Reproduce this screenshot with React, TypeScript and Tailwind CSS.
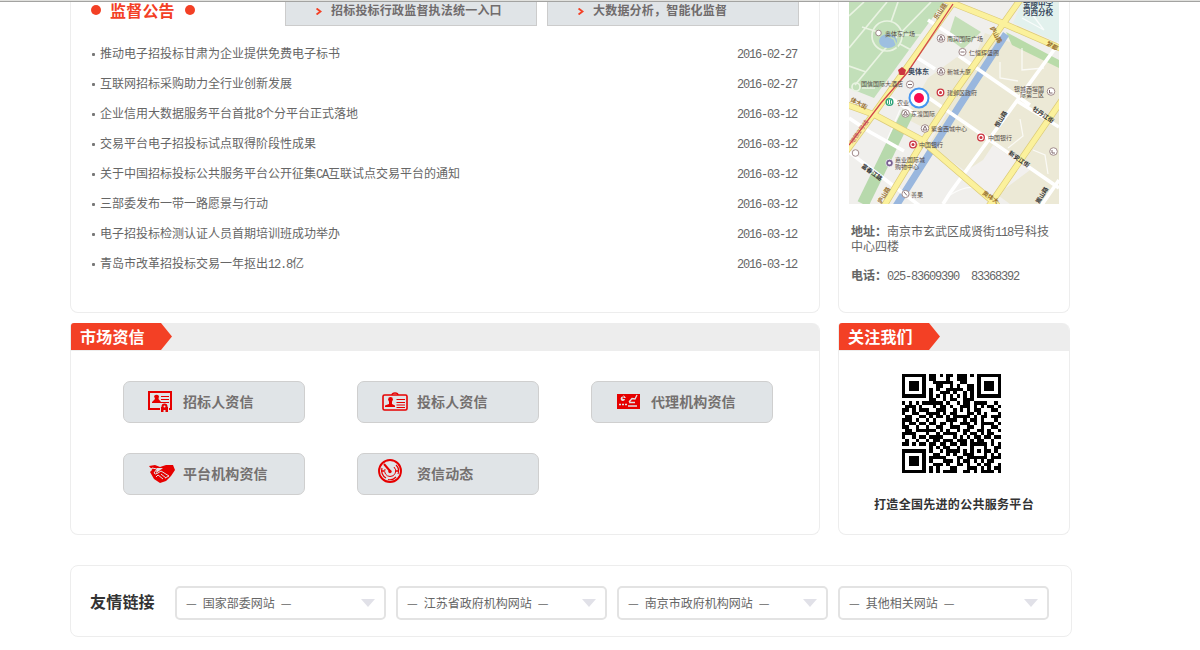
import React from "react";

function Mixed({ text }: { text: string }) {
  return (
    <>
      {text.split(/([\x20-\x7e]+)/).map((part, i) =>
        i % 2 === 1 ? (
          <span key={i} className="font-['Liberation_Mono'] leading-none tracking-[-1.2px] whitespace-pre">
            {part}
          </span>
        ) : (
          part
        )
      )}
    </>
  );
}

const news = [
  ["推动电子招投标甘肃为企业提供免费电子标书", "2016-02-27"],
  ["互联网招标采购助力全行业创新发展", "2016-02-27"],
  ["企业信用大数据服务平台首批8个分平台正式落地", "2016-03-12"],
  ["交易平台电子招投标试点取得阶段性成果", "2016-03-12"],
  ["关于中国招标投标公共服务平台公开征集CA互联试点交易平台的通知", "2016-03-12"],
  ["三部委发布一带一路愿景与行动", "2016-03-12"],
  ["电子招投标检测认证人员首期培训班成功举办", "2016-03-12"],
  ["青岛市改革招投标交易一年抠出12.8亿", "2016-03-12"],
];

function Tab({ text }: { text: string }) {
  return (
    <div className="flex h-6 w-[252px] items-start border border-t-0 border-[#ccc] bg-[#e0e4e7] pl-[30px]">
      <svg className="mt-[6px] mr-[9px] h-[7px] w-[6px]" viewBox="0 0 6 7">
        <path d="M0.5 0.5L4.5 3.5L0.5 6.5" fill="none" stroke="#f34025" strokeWidth="1.9" />
      </svg>
      <span className="leading-[15px] font-bold tracking-[0.2px] text-[#706c6d]">{text}</span>
    </div>
  );
}

const mapLabels: [number, number, string][] = [
  [885, 35.5, "奥体东广场"],
  [947, 40.5, "南润国际广场"],
  [969, 54.5, "仁恒辉盛阁"],
  [947, 73.5, "新城大厦"],
  [861, 86, "国信国际大酒店"],
  [947, 95, "建邺区政府"],
  [897, 104.5, "农业"],
  [911, 116, "东渡国际"],
  [931, 131, "紫金西城中心"],
  [919, 147, "中国银行"],
  [988, 139.5, "中国银行"],
  [895, 162, "嘉业国际城"],
  [895, 168.5, "购物中心"],
  [911, 196.5, "善果"],
  [1014, 90.5, "银城西堤国"],
  [1020, 96.5, "际第二区"],
];

const mapRoadLabels: [number, number, number, string, string][] = [
  [990, 28, 62, "庐山路", "#98702f"],
  [881, 204, -58, "庐山路", "#98702f"],
  [1046, 45, 28, "梦都", "#98702f"],
  [850, 101, 28, "体大街", "#98702f"],
  [982, 194, 34, "奥体大", "#98702f"],
  [861, 167, 36, "富春江路", "#333"],
  [1008, 154, 35, "新安江街", "#333"],
  [1032, 110, 34, "牡丹江街", "#333"],
  [998, 128, -58, "恒山路", "#333"],
  [1039, 204, -58, "嵩山路", "#333"],
];

function MapPicture() {
  return (
    <svg className="block h-[202px] w-[210px]" viewBox="849 2 210 202">
      <rect x="849" y="2" width="210" height="202" fill="#f0efec" />
      <path d="M957 57L978 68L959 101L928 130L905 118L928 78ZM985 33L1059 60V204H1010L950 160L928 146L958 95Z" fill="#ece9d6" />
      <path d="M983 160L993 145L1030 170L990 200L958 176Z" fill="#f2f0ee" />
      <path d="M849 2H944L874 98L849 88Z" fill="#c2dfb9" />
      <path d="M1022 2H1059V43L1013 23Z" fill="#e2f1ed" />
      <path d="M1006 32L1059 60V68L1012 45Z" fill="#b9dba9" />
      <path d="M955 16L981 32L963 49L948 38Z" fill="#c4dfb8" />
      <path d="M908 112L863 204" stroke="#b7d9ac" strokeWidth="12" />
      <g fill="none" stroke="#e9f3e2" strokeWidth="1.7">
        <circle cx="887" cy="36" r="15" />
        <path d="M849 16L864 2M849 48L887 2M855 85L883 51L931 2M862 27L878 32M891 22L898 2M900 44L913 51M862 88H875M903 35H921M849 66L866 72" />
        <circle cx="856" cy="87" r="4" />
      </g>
      <ellipse cx="888" cy="41" rx="9" ry="7" fill="#9dbfe0" />
      <path d="M886 35L894 39L898 49" stroke="#c2dfb9" strokeWidth="1.5" fill="none" />
      <path d="M1006 34L960 105L896 206" stroke="#99b7de" strokeWidth="7" fill="none" />
      <g fill="none" stroke="#fff" strokeWidth="3.6">
        <path d="M845 149L920 206M926 96L1059 188M1059 43L950 193L943 204M1017 101L1059 127M959 56L1030 105M849 118L870 132L904 151M849 145L887 96L919 116M1059 180L1041 206M928 20L962 42M913 55L935 69" />
        <path d="M1025 5L1044 30L1022 18M1000 62V78L1018 81M1022 48V70L1044 68M1020 119L1023 136L1008 148M950 195Q970 183 978 190M900 110L887 140M1033 150L1045 155L1048 174" strokeWidth="1.3" opacity=".75" />
      </g>
      <g fill="none" stroke="#dccb78" strokeWidth="6.6">
        <path d="M955 0L878 108L845 153M1020 0L957 89L925 138L884 206M945 0L1000 22L1062 49M845 104L875 115L920 139L998 206M1062 100L989 206" />
      </g>
      <g fill="none" stroke="#fbf19c" strokeWidth="5.2">
        <path d="M955 0L878 108L845 153M1020 0L957 89L925 138L884 206M945 0L1000 22L1062 49M845 104L875 115L920 139L998 206M1062 100L989 206" />
      </g>
      <path d="M953 4L907 73L881 103L849 145" fill="none" stroke="#d2444b" strokeWidth="1.3" />
      <g fill="#fff" stroke="#a18b8c" strokeWidth="1">
        <circle cx="878.500" cy="33" r="2.800" />
        <circle cx="941" cy="38.500" r="3.800" />
        <circle cx="962.500" cy="52" r="3.600" />
        <circle cx="941" cy="71.500" r="3.800" />
        <circle cx="910" cy="84.500" r="3.600" />
        <circle cx="905.500" cy="113.500" r="3.800" />
        <circle cx="925" cy="128.500" r="3.800" />
        <circle cx="905.500" cy="194" r="3.600" />
        <circle cx="855.500" cy="153" r="3.300" />
        <circle cx="1051" cy="91.500" r="3.800" />
        <circle cx="1053.500" cy="151.500" r="3.800" />
      </g>
      <g fill="none" stroke="#80696d" strokeWidth="1">
        <path d="M939 40L941 36L943 40ZM939 73L941 69L943 73ZM903.500 115L905.500 111L907.500 115ZM923 130L925 126L927 130ZM960.500 52H964.500M908 84.500H912M904 192L907 195.500M1049.500 90V93H1052.500M1052 150V153H1055" />
      </g>
      <g fill="#fff" stroke="#cc3540" strokeWidth="1.3">
        <circle cx="940.500" cy="92.500" r="3.300" />
        <circle cx="913" cy="144.500" r="3.300" />
        <circle cx="981" cy="137.500" r="3.300" />
      </g>
      <g fill="#cc3540">
        <circle cx="940.500" cy="92.500" r="1.500" />
        <circle cx="913" cy="144.500" r="1.500" />
        <circle cx="981" cy="137.500" r="1.500" />
        <path d="M902 67L906 70L904.500 75H899.500L898 70Z" />
      </g>
      <circle cx="889.500" cy="102" r="3.300" fill="#fff" stroke="#31a57c" strokeWidth="1.5" />
      <path d="M888.500 100V104M890.500 100V104" stroke="#31a57c" />
      <circle cx="889.500" cy="163" r="3.800" fill="#786091" stroke="#fff" strokeWidth=".7" />
      <circle cx="889.500" cy="163" r="1.500" fill="#fff" />
      <g className="font-['Noto_Sans_CJK_SC',sans-serif] text-[6px]" fill="#554b48">
        {mapLabels.map(([x, y, text], i) => (
          <text key={i} x={x} y={y}>{text}</text>
        ))}
      </g>
      <g className="font-['Noto_Sans_CJK_SC',sans-serif] text-[6px] font-bold">
        {mapRoadLabels.map(([x, y, angle, text, color], i) => (
          <text key={i} transform={`translate(${x} ${y}) rotate(${angle})`} fill={color}>{text}</text>
        ))}
        <text transform="translate(937 20) rotate(-56)" fill="#98702f">乐山路</text>
        <text x="853" y="144" transform="rotate(-54 853 144)" fill="#c24c62" className="font-normal">地铁2号线</text>
      </g>
      <g className="font-['Noto_Sans_CJK_SC',sans-serif] text-[7.500px] font-bold" fill="#37485c">
        <text x="1023" y="6.500">金陵中学</text>
        <text x="1023" y="14.500">河西分校</text>
        <text x="908" y="74" className="text-[7px]">奥体东</text>
      </g>
      <circle cx="919" cy="98" r="9.500" fill="#fff" stroke="#4595f0" strokeWidth="2" />
      <circle cx="919" cy="98" r="5" fill="#fa0b50" />
    </svg>
  );
}

function SectionHead({ title }: { title: string }) {
  return (
    <div className="flex h-7 overflow-hidden rounded-tl-[3px] rounded-tr-[7px] bg-[#ededed]">
      <div className="h-[27px] w-[90px] bg-[#f34025] pl-[9px] text-[16px] leading-[26px] font-bold tracking-[0.2px] whitespace-nowrap text-white">
        {title}
      </div>
      <svg className="h-[27px] w-[11px]" viewBox="0 0 11 27">
        <path d="M0 0L11 13.5L0 27Z" fill="#f34025" />
      </svg>
    </div>
  );
}

const icons: Record<string, React.ReactNode> = {
  certificate: (
    <svg className="h-6 w-[30px]" viewBox="0 0 30 24">
      <path d="M1 1H23V18H1Z" fill="none" stroke="#e60000" strokeWidth="2" />
      <path d="M6 5Q8.500 2.500 11 5L10.500 8L13 11V12H4V11L7 8Z" fill="#e60000" />
      <path d="M13 5.500H21M13 8.500H21M13 11.500H21" stroke="#e60000" />
      <path d="M12 13H21V22H12Z" fill="#e0e4e7" />
      <circle cx="16.500" cy="15.500" r="3" fill="#e60000" />
      <path d="M13 16H20V21H17.500V19H15.500V21H13Z" fill="#e60000" />
      <circle cx="16.500" cy="15.500" r="1" fill="#e0e4e7" />
    </svg>
  ),
  badge: (
    <svg className="h-5 w-[30px]" viewBox="0 0 30 20">
      <path d="M10 3Q10 1 13 1Q16 1 16 3" fill="none" stroke="#e60000" strokeWidth="1.3" />
      <rect x="1" y="3" width="24" height="15" rx="1.500" fill="none" stroke="#e60000" strokeWidth="1.600" />
      <circle cx="8.500" cy="7.500" r="2.400" fill="#e60000" />
      <path d="M7 9H10V12L13 13.500V15H3V13.500L7 12Z" fill="#e60000" />
      <path d="M14.500 7.500H23M14.500 10.500H23M14.500 13H23M14.500 15.500H23" stroke="#e60000" />
    </svg>
  ),
  chart: (
    <svg className="h-[15px] w-[30px]" viewBox="0 0 30 15">
      <rect width="23" height="15" fill="#e60000" />
      <path d="M6 2.500A2.200 2.200 0 1 0 8 5H5.500ZM6.500 1V4H9" fill="#e0e4e7" />
      <path d="M2 10.500H4M5 10.500H7M8 10.500H10M12 8L15 4.500L18 5L20 1M12 8.500H18M11 12H20" stroke="#e0e4e7" strokeWidth="1.3" fill="none" />
    </svg>
  ),
  handshake: (
    <svg className="h-[18px] w-[30px]" viewBox="0 0 30 18">
      <path d="M0 1L6 0L11 2L17 0L24 0L26 5L22 11L17 16L11 18L5 14L1 7L3 5Z" fill="#e60000" />
      <path d="M3 3L8 4L5 8Q6 10 9 8L12 6L20 11L16 13M9 10L14 14M12 9L17 13M7 12L9 10" fill="none" stroke="#e0e4e7" strokeWidth="1" />
      <path d="M8 3L14 3L10 6L7 8Z" fill="#e0e4e7" />
      <path d="M0 2.500L4 3.500L1 6Z" fill="#e0e4e7" />
    </svg>
  ),
  radar: (
    <svg className="h-6 w-[30px]" viewBox="0 0 30 24">
      <g fill="none" stroke="#e60000">
        <circle cx="12" cy="12" r="11" strokeWidth="1.900" />
        <path d="M4 9A8.500 8.500 0 0 0 8 19M10 20.500A8.500 8.500 0 0 0 18 18M20 15A8.500 8.500 0 0 0 18 6" strokeWidth="1.200" />
        <path d="M7 10A5.500 5.500 0 0 0 12 17.500A5.500 5.500 0 0 0 16 8" />
        <path d="M6 5L12 12" strokeWidth="2" />
        <path d="M3 12H6M18 12H21" strokeWidth="1.400" />
      </g>
      <circle cx="12" cy="12.500" r="1.700" fill="#e60000" />
    </svg>
  ),
};

function CreditButton({ icon, text, pad }: { icon: string; text: string; pad: string }) {
  return (
    <div className={"flex h-[42px] rounded-[7px] border border-[#cfcfcf] bg-[#e0e4e7] " + pad}>
      <div className="w-[35px] shrink-0">{icons[icon]}</div>
      <span className="mt-[10px] self-start text-[14px] leading-[18px] font-bold tracking-[0.1px] text-[#74706f]">{text}</span>
    </div>
  );
}

const qr = [
  "11111110110101101110101111111",
  "10000010110001001110001000001",
  "10111010011111100110001011101",
  "10111010001100101001101011101",
  "10111010101001111101101011101",
  "10000010100111010010101000001",
  "11111110101010101010101111111",
  "00000000110010110011100000000",
  "10101011111101001011011110010",
  "01110100010110100111010101101",
  "11010111001110010101011000110",
  "10011001111010110001101010001",
  "01100110101101011111010110111",
  "11101001010001110010110100010",
  "10110110110110100111010111101",
  "11001001001100111001100100110",
  "01101111110101001011001101001",
  "11110001001011110010110101100",
  "10010110111100010101011011011",
  "01001001011011101110101100100",
  "11010110110110110110111110101",
  "00000000101011001000100010011",
  "11111110100101111010101011010",
  "10000010011001010011100010101",
  "10111010111110001101111110111",
  "10111010100011101011010101100",
  "10111010011101001101001011001",
  "10000010101000110001110101011",
  "11111110101011110011010111101",
];

function QrCode() {
  return (
    <svg className="h-[99px] w-[99px]" viewBox="0 0 29 29" shapeRendering="crispEdges">
      {qr.map((row, y) =>
        [...row].map((cell, x) => (cell === "1" ? <rect key={`${x}-${y}`} x={x} y={y} width="1" height="1" /> : null))
      )}
    </svg>
  );
}

function Dot() {
  return <i className="size-[10px] rounded-full bg-[#f34025]" />;
}

const links = ["国家部委网站", "江苏省政府机构网站", "南京市政府机构网站", "其他相关网站"];

export default function App() {
  return (
    <div className="h-[650px] w-[1200px] overflow-hidden bg-white font-['Noto_Sans_CJK_SC',sans-serif] text-[12px] text-[#666]">
      <div className="h-[2px] border-b border-[#a3a3a1] bg-[#e1e1de]" />
      <main className="ml-[70px] w-[1002px]">
        <div className="flex gap-[18px]">
          <section className="h-[311px] w-[750px] rounded-b-[8px] border border-t-0 border-[#ededed]">
            <div className="flex h-6 pr-5 pl-5">
              <div className="flex h-4 w-[194px] items-center gap-[9px]">
                <Dot />
                <h2 className="w-[66px] text-[16px] leading-[16px] font-bold tracking-[0.2px] text-[#f34025]">监督公告</h2>
                <Dot />
              </div>
              <div className="flex gap-[10px]">
                <Tab text="招标投标行政监督执法统一入口" />
                <Tab text="大数据分析，智能化监督" />
              </div>
            </div>
            <ul className="mt-3 pr-[21px] pl-[21px]">
              {news.map(([title, date], i) => (
                <li key={i} className="flex h-[30px] items-center leading-[30px]">
                  <i className="mt-[2px] mr-[5px] size-[3px] rounded-[1px] bg-[#777]" />
                  <span className="flex-1"><Mixed text={title} /></span>
                  <span className="w-[61px]"><Mixed text={date} /></span>
                </li>
              ))}
            </ul>
          </section>
          <section className="h-[311px] w-[232px] rounded-b-[8px] border border-t-0 border-[#ededed] pl-[10px]">
            <MapPicture />
            <div className="mt-5 ml-[2px] w-[206px] leading-[14px]">
              <p><b>地址：</b><Mixed text="南京市玄武区成贤街118号科技中心四楼" /></p>
              <p className="mt-[15px]"><b>电话：</b><Mixed text="025-83609390  83368392" /></p>
            </div>
          </section>
        </div>
        <div className="mt-[10px] flex gap-[18px]">
          <section className="h-[212px] w-[750px] rounded-[8px] rounded-tl-[4px] border border-t-0 border-[#ededed]">
            <SectionHead title="市场资信" />
            <div className="mt-[30px] ml-[52px] grid w-[650px] grid-cols-[182px_182px_182px] gap-x-[52px] gap-y-[30px]">
              <CreditButton icon="certificate" text="招标人资信" pad="pl-6 [&_svg]:mt-[9px]" />
              <CreditButton icon="badge" text="投标人资信" pad="pl-6 [&_svg]:mt-[10px]" />
              <CreditButton icon="chart" text="代理机构资信" pad="pl-[25px] [&>span]:-ml-px [&_svg]:mt-3" />
              <CreditButton icon="handshake" text="平台机构资信" pad="pl-[25px] [&>span]:-ml-px [&_svg]:mt-[11px]" />
              <CreditButton icon="radar" text="资信动态" pad="pl-5 [&>span]:ml-1 [&_svg]:mt-[5px]" />
            </div>
          </section>
          <section className="h-[212px] w-[232px] rounded-[8px] rounded-tl-[4px] border border-t-0 border-[#ededed]">
            <SectionHead title="关注我们" />
            <div className="mt-[23px] flex flex-col items-center pr-[5px]">
              <QrCode />
              <p className="mt-[22px] pl-[5px] leading-[18px] font-bold tracking-[0.3px] text-[#333]">打造全国先进的公共服务平台</p>
            </div>
          </section>
        </div>
        <section className="mt-[30px] flex h-[72px] items-center gap-[10px] rounded-[8px] border border-[#ededed] pt-[3px] pl-[19px]">
          <h2 className="w-[75px] pb-[3px] text-[16px] font-bold tracking-[0.2px] text-[#333]">友情链接</h2>
          {links.map((name) => (
            <div key={name} className="flex h-[34px] w-[211px] items-center justify-between rounded-[5px] border-2 border-[#e3e3e3] px-[9px]">
              <span className="pt-px"><Mixed text={`— ${name} —`} /></span>
              <svg className="mt-px h-[8px] w-[14px]" viewBox="0 0 14 8">
                <path d="M0 0H14L7 8Z" fill="#e1e1e8" />
              </svg>
            </div>
          ))}
        </section>
      </main>
    </div>
  );
}
